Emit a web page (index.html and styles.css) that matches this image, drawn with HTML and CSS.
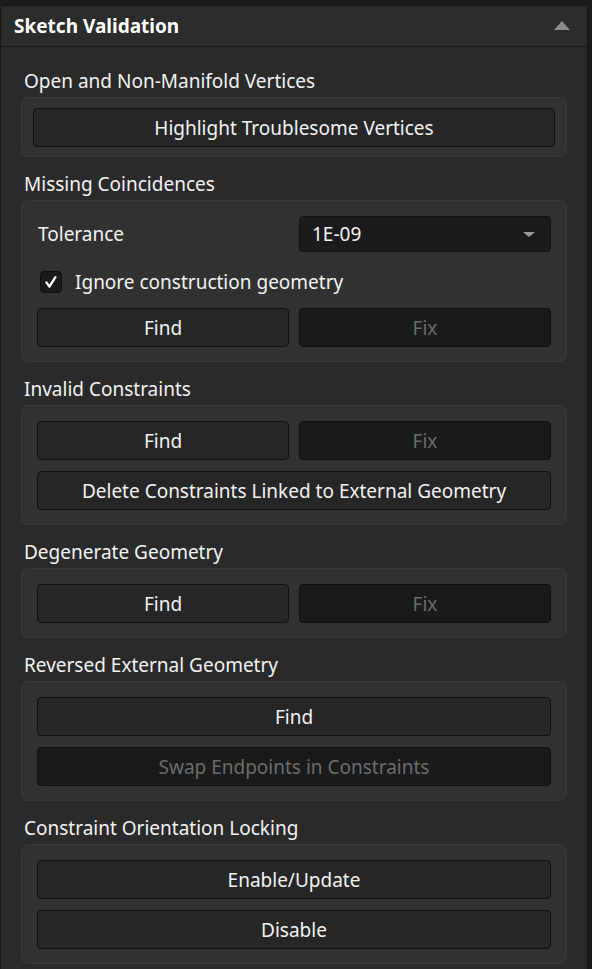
FILE: index.html
```html
<!DOCTYPE html>
<html lang="en">
<head>
    <meta charset="UTF-8">
    <meta name="viewport" content="width=device-width, initial-scale=1.0">
    <title>Sketch Validation</title>
    <link rel="stylesheet" href="styles.css">
</head>
<body>

    <div class="panel">
        <div class="panel-header">
            <h2>Sketch Validation</h2>
            <span class="collapse-arrow"></span>
        </div>

        <div class="panel-body">
            <div class="group-label">Open and Non-Manifold Vertices</div>
            <div class="group group-tight">
                <button class="button">Highlight Troublesome Vertices</button>
            </div>

            <div class="group-label">Missing Coincidences</div>
            <div class="group">
                <div class="row">
                    <span class="field-label">Tolerance</span>
                    <div class="combo">
                        <span>1E-09</span>
                        <span class="combo-arrow"></span>
                    </div>
                </div>
                <label class="check-row">
                    <span class="checkbox">
                        <svg width="14" height="14" viewBox="0 0 14 14">
                            <path d="M2.4 7.4 L5.4 11.6 L11.4 2.2" fill="none" stroke="#fff" stroke-width="2.4" stroke-linecap="round" stroke-linejoin="round"/>
                        </svg>
                    </span>
                    Ignore construction geometry
                </label>
                <div class="row">
                    <button class="button">Find</button>
                    <button class="button" disabled>Fix</button>
                </div>
            </div>

            <div class="group-label">Invalid Constraints</div>
            <div class="group">
                <div class="row">
                    <button class="button">Find</button>
                    <button class="button" disabled>Fix</button>
                </div>
                <button class="button">Delete Constraints Linked to External Geometry</button>
            </div>

            <div class="group-label">Degenerate Geometry</div>
            <div class="group">
                <div class="row">
                    <button class="button">Find</button>
                    <button class="button" disabled>Fix</button>
                </div>
            </div>

            <div class="group-label">Reversed External Geometry</div>
            <div class="group">
                <button class="button">Find</button>
                <button class="button" disabled>Swap Endpoints in Constraints</button>
            </div>

            <div class="group-label">Constraint Orientation Locking</div>
            <div class="group">
                <button class="button">Enable/Update</button>
                <button class="button">Disable</button>
            </div>
        </div>
    </div>

</body>
</html>
```

FILE: styles.css
```css
body {
    margin: 0;
    font-family: "Noto Sans", "Open Sans", sans-serif;
    font-size: 19px;
    background-color: #1c1c1c;
    color: #f2f2f2;
}
.panel {
    width: 588px;
    margin-top: 5px;
    background-color: #2a2a2a;
    border: 1px solid #161616;
    border-radius: 5px 5px 0 0;
    border-bottom: none;
    min-height: 964px;
    box-sizing: border-box;
}
.panel-header {
    height: 40px;
    display: flex;
    align-items: center;
    justify-content: space-between;
    padding: 0 17px 0 13px;
    background-color: #2c2c2c;
    border-bottom: 1px solid #171717;
}
.panel-header h2 {
    margin: 0;
    font-size: 19px;
    font-weight: bold;
    color: #fff;
}
.collapse-arrow {
    width: 0;
    height: 0;
    border-left: 8px solid transparent;
    border-right: 8px solid transparent;
    border-bottom: 9px solid #8a8a8a;
    margin-top: -2px;
}
.panel-body {
    padding: 23px 20px 6px 20px;
}
.group-label {
    line-height: 22px;
    margin: 16px 0 5px 3px;
}
.group-label:first-child {
    margin-top: 0;
}
.group {
    display: flex;
    flex-direction: column;
    gap: 11px;
    padding: 15px 15px 14px 15px;
    background-color: #313131;
    border: 1px solid #383838;
    border-radius: 7px;
}
.group-tight {
    padding: 10px 11px 9px 11px;
}
.row {
    display: grid;
    grid-template-columns: 1fr 1fr;
    gap: 10px;
    align-items: center;
}
.field-label {
    padding-left: 1px;
}
.button {
    height: 39px;
    padding: 0 10px;
    font-family: inherit;
    font-size: 19px;
    color: #f2f2f2;
    background-color: #262626;
    border: 1px solid #101010;
    border-radius: 4px;
}
.button:disabled {
    background-color: #1a1a1a;
    color: #6c6c6c;
}
.combo {
    height: 36px;
    display: flex;
    align-items: center;
    justify-content: space-between;
    padding: 0 15px 0 12px;
    background-color: #1b1b1b;
    border: 1px solid #121212;
    border-radius: 4px;
    box-sizing: border-box;
}
.combo-arrow {
    width: 0;
    height: 0;
    border-left: 6px solid transparent;
    border-right: 6px solid transparent;
    border-top: 5px solid #9a9a9a;
}
.check-row {
    display: flex;
    align-items: center;
    gap: 13px;
    margin: 8px 0 5px 3px;
    height: 21px;
}
.checkbox {
    width: 22px;
    height: 22px;
    display: flex;
    align-items: center;
    justify-content: center;
    background-color: #1a1a1a;
    border: 1px solid #0f0f0f;
    border-radius: 4px;
    box-sizing: border-box;
}
```
